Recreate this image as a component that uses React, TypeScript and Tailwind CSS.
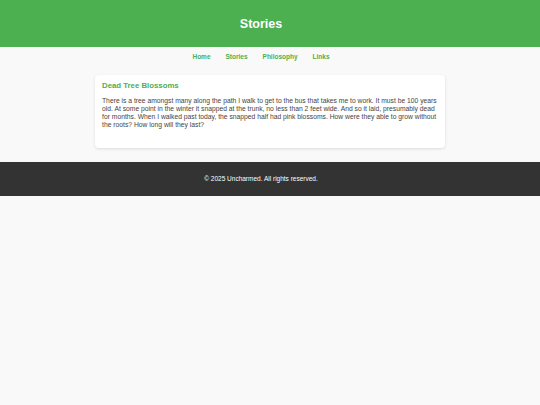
export default function App() {
  return (
    <div className="min-h-[405px] bg-[#f9f9f9] font-['Liberation_Sans',Arial,sans-serif] text-[#333]">
      <header className="h-[47px] bg-[#4caf50] flex items-center justify-center pr-[18px] pt-[2px]">
        <h1 className="text-[12.5px] font-bold text-white">Stories</h1>
      </header>
      <nav className="h-[20px] flex items-center justify-center gap-[15px] pr-[18px] text-[6.5px] font-bold text-[#4caf50]">
        <a>Home</a>
        <a>Stories</a>
        <a>Philosophy</a>
        <a>Links</a>
      </nav>
      <main className="w-[350px] mx-auto mt-[8px] mb-[14px]">
        <article className="bg-white rounded-[4px] shadow-[0_1px_3px_rgba(0,0,0,0.12)] px-[7px] pt-[6px] pb-[19px]">
          <h2 className="text-[7.8px] font-bold text-[#4caf50] leading-[10px]">Dead Tree Blossoms</h2>
          <p className="mt-[6px] text-[6.75px] leading-[8px] text-[#444]">
            There is a tree amongst many along the path I walk to get to the bus that takes me to work. It must be 100 years old. At some point in the winter it snapped at the trunk, no less than 2 feet wide. And so it laid, presumably dead for months. When I walked past today, the snapped half had pink blossoms. How were they able to grow without the roots? How long will they last?
          </p>
        </article>
      </main>
      <footer className="h-[34px] bg-[#333] flex items-center justify-center pr-[18px]">
        <p className="text-[6.5px] text-white">© 2025 Uncharmed. All rights reserved.</p>
      </footer>
    </div>
  );
}
